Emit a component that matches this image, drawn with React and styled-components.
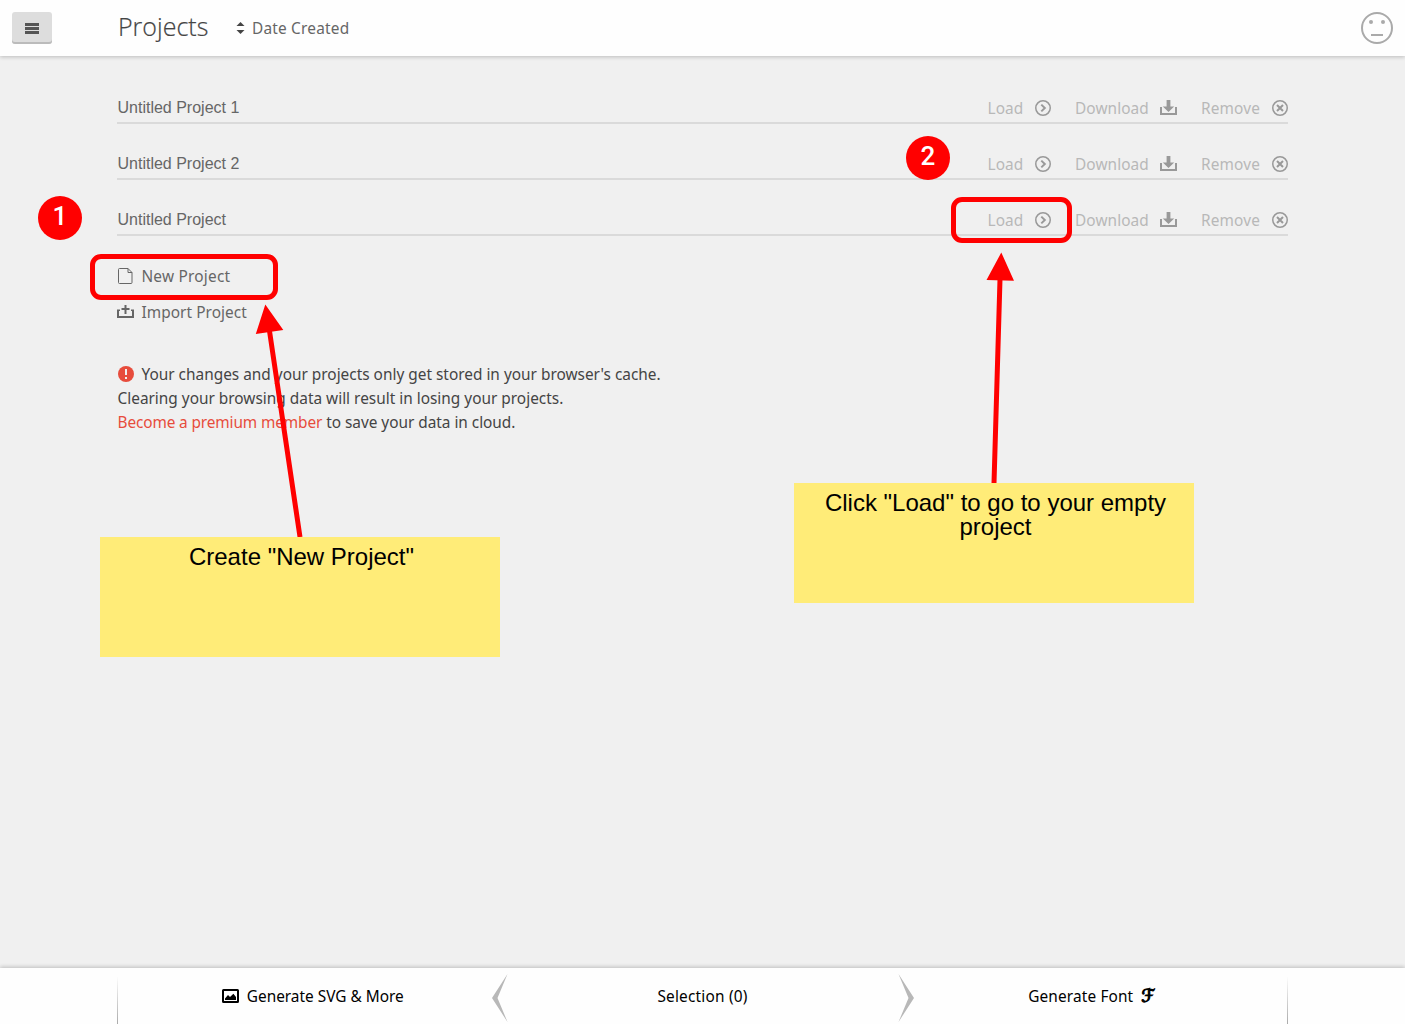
import React from "react";
import styled, { createGlobalStyle } from "styled-components";

const Global = createGlobalStyle`
  *, *::before, *::after { box-sizing: border-box; }
  body { margin: 0; background: #f0f0f0; }
  button { border: 0; padding: 0; background: none; font: inherit; color: inherit; text-align: left; }
  svg { display: block; flex: none; }
`;

const Page = styled.div`
  position: relative;
  height: 1024px;
  display: flex;
  flex-direction: column;
  overflow: hidden;
  background: #f0f0f0;
  color: #444;
  font: 15.4px/24px "Noto Sans", "Open Sans", sans-serif;
`;

const Label = styled.span`
  padding-top: 2px;
  white-space: nowrap;
  letter-spacing: ${(p) => p.$track || 0}px;
`;

const Header = styled.header`
  flex: none;
  height: 56px;
  display: flex;
  align-items: center;
  padding: 0 12px;
  background: #fefefe;
  box-shadow: 0 1px 4px rgba(0, 0, 0, 0.22);
`;

const MenuButton = styled.button`
  width: 40px;
  height: 32px;
  display: flex;
  align-items: center;
  justify-content: center;
  border-radius: 3px;
  background: #ddd;
  box-shadow: inset 0 -2px 0 #bbb;
`;

const Title = styled.h1`
  margin: 0 27px 4px 66px;
  width: 91px;
  font: 300 25px/32px "Open Sans", "Noto Sans", sans-serif;
  color: #444;
  -webkit-text-stroke: 0.2px #444;
`;

const SortButton = styled.button`
  flex: 1;
  display: flex;
  align-items: center;
  gap: 7px;
  color: #666;
`;

const Main = styled.main`
  flex: 1;
  padding: 12px 117px 0;
`;

const Row = styled.div`
  height: 32px;
  margin-top: 24px;
  display: flex;
  align-items: center;
  border-bottom: 2px solid #dadada;
`;

const ProjectName = styled.span`
  flex: 1;
  padding: 2px 0 0 0.5px;
  font: 16px/24px "Liberation Sans", Arial, sans-serif;
  color: #666;
`;

const Actions = styled.div`
  display: flex;
  gap: 24px;
`;

const Action = styled.button`
  width: ${(p) => p.$width}px;
  display: flex;
  align-items: center;
  justify-content: space-between;
  padding-top: 2px;
  color: #b8b8b8;
  svg { color: #999; }
`;

const Creation = styled.div`
  margin-top: 22px;
`;

const CreateButton = styled.button`
  height: 36px;
  display: flex;
  align-items: center;
  gap: 7.4px;
  color: #666;
`;

const Notice = styled.p`
  margin: 33px 0 0;
  padding-left: 0.5px;
`;

const NoticeLine = styled.span`
  display: flex;
  white-space: pre;
  align-items: center;
`;

const AlertSlot = styled.span`
  width: 24px;
  margin-top: -2px;
`;

const PremiumLink = styled.a`
  color: #e74c3c;
  letter-spacing: -0.12px;
`;

const LinkTail = styled.span`
  letter-spacing: -0.03px;
`;

const Footer = styled.footer`
  flex: none;
  height: 56px;
  padding: 0 117px;
  background: #fefefe;
  color: #000;
  box-shadow: 0 -1px 4px rgba(0, 0, 0, 0.22);
  display: grid;
  grid-template-columns: 1px 1fr 16px 390px 16px 1fr 1px;
  align-items: center;
`;

const Divider = styled.i`
  align-self: end;
  height: 48px;
  background: linear-gradient(#fefefe, #aaa);
`;

const FooterTab = styled.button`
  display: flex;
  align-items: center;
  justify-content: center;
  gap: 8px;
  height: 56px;
  padding-left: ${(p) => p.$before || 0}px;
  padding-right: ${(p) => p.$after || 0}px;
`;

const ScriptMark = styled.span`
  width: 15px;
  font: 18px/24px "DejaVu Sans", sans-serif;
  -webkit-text-stroke: 1.1px #000;
`;

const Arrows = styled.svg`
  position: absolute;
  inset: 0;
  pointer-events: none;
`;

const Highlight = styled.div`
  position: absolute;
  left: ${(p) => p.$x}px;
  top: ${(p) => p.$y}px;
  width: ${(p) => p.$w}px;
  height: 46px;
  border: 5px solid #f00;
  border-radius: 11px;
`;

const Badge = styled.div`
  position: absolute;
  left: ${(p) => p.$x}px;
  top: ${(p) => p.$y}px;
  width: 44px;
  height: 44px;
  border-radius: 50%;
  background: #f00;
  color: #fff;
  text-align: center;
  font: 500 26px/41px Roboto, Arial, sans-serif;
`;

const Sticky = styled.div`
  position: absolute;
  left: ${(p) => p.$x}px;
  top: ${(p) => p.$y}px;
  width: 400px;
  height: 120px;
  padding: 8px 24px 0 27px;
  background: #ffec78;
  color: #000;
  text-align: center;
  font: 24px/24px "Liberation Sans", Arial, sans-serif;
`;

const MenuIcon = () => (
  <svg width="14" height="11" viewBox="0 0 14 11" fill="#555">
    <path d="M0 0h14v3H0zM0 4h14v3H0zM0 8h14v3H0z" />
  </svg>
);

const SortIcon = () => (
  <svg width="9" height="12" viewBox="0 0 9 12" fill="#444">
    <path d="M4.5 0 8.5 4H.5zM.5 8h8l-4 4z" />
  </svg>
);

const FaceIcon = () => (
  <svg width="32" height="32" viewBox="0 0 32 32" fill="#aaa">
    <circle cx="16" cy="16" r="15" fill="none" stroke="#aaa" strokeWidth="2" />
    <circle cx="10" cy="10" r="2" />
    <circle cx="22" cy="10" r="2" />
    <path d="M10 22h12v2H10z" />
  </svg>
);

const LoadIcon = () => (
  <svg width="16" height="16" viewBox="0 0 16 16" fill="none" stroke="currentColor">
    <circle cx="8" cy="8" r="7.25" strokeWidth="1.5" />
    <path d="M6.3 4.6 9.8 8l-3.5 3.4" strokeWidth="2" />
  </svg>
);

const DownloadIcon = () => (
  <svg width="17" height="16" viewBox="0 0 17 16" fill="currentColor">
    <path d="M6.6 0h3.8v6.6h3.8L8.5 12 2.8 6.6h3.8z" />
    <path d="M0 7h2v6h13V7h2v8H0z" />
  </svg>
);

const RemoveIcon = () => (
  <svg width="16" height="16" viewBox="0 0 16 16" fill="none" stroke="currentColor">
    <circle cx="8" cy="8" r="7.25" strokeWidth="1.5" />
    <path d="m5 5 6 6m0-6-6 6" strokeWidth="2" />
  </svg>
);

const FileIcon = () => (
  <svg width="17" height="16" viewBox="0 0 17 16" fill="none" stroke="#666">
    <path d="M2.5.5H11l4 4v10q0 1-1 1H2.5q-1 0-1-1v-13q0-1 1-1Z" />
    <path d="M11 .5v4h4" />
  </svg>
);

const ImportIcon = () => (
  <svg width="17" height="16" viewBox="0 0 17 16" fill="#666">
    <path d="M7.5 1h2v3h3v2h-3v4h-2V6h-3V4h3z" />
    <path d="M0 5.500h3v1.500H2v5h13V7h-1V5.500h3V14H0z" />
  </svg>
);

const AlertIcon = () => (
  <svg width="16" height="16" viewBox="0 0 16 16">
    <circle cx="8" cy="8" r="8" fill="#e74c3c" />
    <path d="M7 3h2v6H7zM7 11h2v2H7z" fill="#f0f0f0" />
  </svg>
);

const ImageIcon = () => (
  <svg width="17" height="14" viewBox="0 0 17 14">
    <rect x="1" y="1" width="15" height="12" rx=".5" fill="none" stroke="#000" strokeWidth="2" />
    <path d="M3 11V9.400L6 6l2 2 3.400-3.300L14 8v3z" />
  </svg>
);

const Chevron = ({ flip }) => (
  <svg width="16" height="52" viewBox="0 0 16 52" fill="#b8b8b8">
    <path transform={flip ? "translate(16 0) scale(-1 1)" : undefined} d="M15.500 4 0 28l15.500 24L5.500 28z" />
  </svg>
);

const projects = ["Untitled Project 1", "Untitled Project 2", "Untitled Project"];

export default function App() {
  return (
    <Page>
      <Global />
      <Header>
        <MenuButton aria-label="Menu"><MenuIcon /></MenuButton>
        <Title>Projects</Title>
        <SortButton><SortIcon /><Label $track={0.2}>Date Created</Label></SortButton>
        <FaceIcon />
      </Header>
      <Main>
        {projects.map((name) => (
          <Row key={name}>
            <ProjectName>{name}</ProjectName>
            <Actions>
              <Action $width={63.5}><Label $track={0.1}>Load</Label><LoadIcon /></Action>
              <Action $width={102}><Label $track={0.08}>Download</Label><DownloadIcon /></Action>
              <Action $width={87}><Label $track={0.15}>Remove</Label><RemoveIcon /></Action>
            </Actions>
          </Row>
        ))}
        <Creation>
          <CreateButton><FileIcon /><Label $track={0.23}>New Project</Label></CreateButton>
          <CreateButton><ImportIcon /><Label $track={0.07}>Import Project</Label></CreateButton>
        </Creation>
        <Notice>
          <NoticeLine>
            <AlertSlot><AlertIcon /></AlertSlot>
            Your changes and your projects only get stored in your browser's cache.
          </NoticeLine>
          <NoticeLine>Clearing your browsing data will result in losing your projects.</NoticeLine>
          <NoticeLine>
            <PremiumLink>Become a premium member</PremiumLink>
            <LinkTail>{" to save your data in cloud."}</LinkTail>
          </NoticeLine>
        </Notice>
      </Main>
      <Footer>
        <Divider />
        <FooterTab $before={16}><ImageIcon /><Label>Generate SVG &amp; More</Label></FooterTab>
        <Chevron />
        <FooterTab><Label $track={0.2}>Selection (0)</Label></FooterTab>
        <Chevron flip />
        <FooterTab $after={16}><Label $track={0.13}>Generate Font</Label><ScriptMark>ℱ</ScriptMark></FooterTab>
        <Divider />
      </Footer>
      <Arrows width="1405" height="1024" fill="#f00" stroke="#f00">
        <path d="M269.5 331 300 537M1000 279l-6 204" strokeWidth="5" />
        <path d="m265.3 304.500-9.500 29.500 27.500-4zM1001.300 252.500l-14.800 27.500 27.500.8z" stroke="none" />
      </Arrows>
      <Highlight $x={89.5} $y={254.3} $w={188.5} />
      <Highlight $x={951.4} $y={196.7} $w={121} />
      <Badge $x={38} $y={196}>1</Badge>
      <Badge $x={906} $y={136}>2</Badge>
      <Sticky $x={100} $y={537}>Create "New Project"</Sticky>
      <Sticky $x={794} $y={483}>Click "Load" to go to your empty project</Sticky>
    </Page>
  );
}
